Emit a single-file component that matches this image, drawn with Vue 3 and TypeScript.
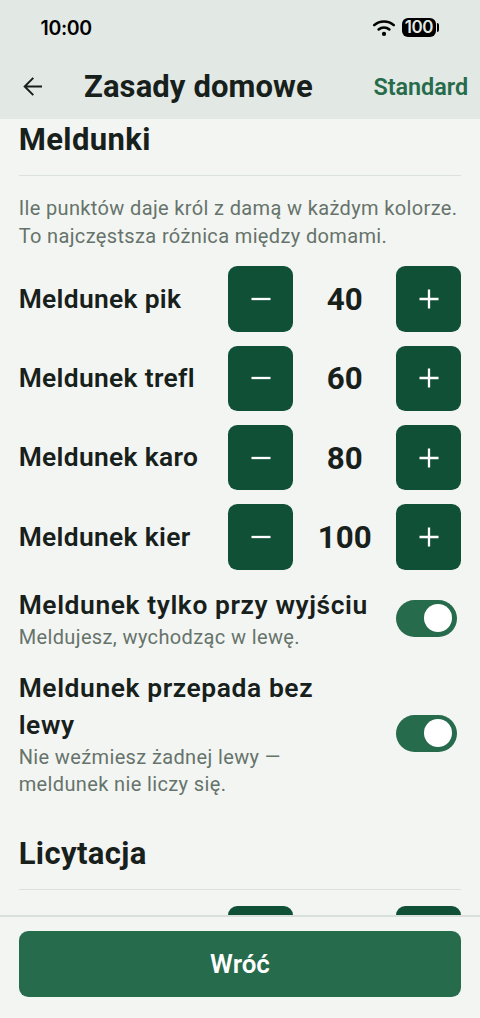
<script setup lang="ts">
import { ref } from 'vue'

interface Meld {
  label: string
  value: number
}
interface Option {
  title: string
  hint: string
  on: boolean
  kind: string
}

const melds = ref<Meld[]>([
  { label: 'Meldunek pik', value: 40 },
  { label: 'Meldunek trefl', value: 60 },
  { label: 'Meldunek karo', value: 80 },
  { label: 'Meldunek kier', value: 100 },
])

const options = ref<Option[]>([
  { title: 'Meldunek tylko przy wyjściu', hint: 'Meldujesz, wychodząc w lewę.', on: true, kind: 'short' },
  { title: 'Meldunek przepada bez lewy', hint: 'Nie weźmiesz żadnej lewy — meldunek nie liczy się.', on: true, kind: 'tall' },
])
</script>

<template>
  <div class="screen">
    <header class="top">
      <div class="status">
        <span class="clock">10:00</span>
        <span class="indicators">
          <svg class="wifi" width="24" height="18" viewBox="0 0 24 18" fill="none" stroke="#000" stroke-linecap="round">
            <path d="M2.2 6.2C7.6 1.2 16.4 1.2 21.8 6.2" stroke-width="2.5" />
            <path d="M6.6 10.5C9.7 7.8 14.3 7.8 17.4 10.5" stroke-width="2.5" />
            <circle cx="12" cy="14.9" r="2.1" fill="#000" stroke="none" />
          </svg>
          <span class="battery">100</span>
          <span class="nub"></span>
        </span>
      </div>
      <div class="bar">
        <svg class="back" width="20" height="20" viewBox="0 0 20 20" fill="none" stroke="#17201b" stroke-width="2">
          <path d="M19 9.5H2.2M10.3 .9L1.7 9.5l8.6 8.6" />
        </svg>
        <h1>Zasady domowe</h1>
        <span class="action">Standard</span>
      </div>
    </header>

    <main class="content">
      <h2 class="first">Meldunki</h2>
      <p class="intro">Ile punktów daje król z damą w każdym kolorze.<br />To najczęstsza różnica między domami.</p>

      <div v-for="m in melds" :key="m.label" class="row">
        <span class="label">{{ m.label }}</span>
        <button class="step" @click="m.value -= 10">
          <svg width="20" height="20" viewBox="0 0 20 20"><path d="M.5 10h19" stroke="#fff" stroke-width="2.3" /></svg>
        </button>
        <span class="value">{{ m.value }}</span>
        <button class="step" @click="m.value += 10">
          <svg width="20" height="20" viewBox="0 0 20 20"><path d="M.5 10h19M10 .5v19" stroke="#fff" stroke-width="2.3" /></svg>
        </button>
      </div>

      <div v-for="o in options" :key="o.title" class="option" :class="o.kind">
        <div class="copy">
          <div class="label">{{ o.title }}</div>
          <div class="hint">{{ o.hint }}</div>
        </div>
        <button class="switch" :class="{ on: o.on }" @click="o.on = !o.on"><span class="thumb"></span></button>
      </div>

      <h2 class="second">Licytacja</h2>
      <div class="row">
        <span class="label"></span>
        <button class="step"></button>
        <span class="value"></span>
        <button class="step"></button>
      </div>
    </main>

    <footer class="bottom">
      <button class="return">Wróć</button>
    </footer>
  </div>
</template>

<style>
body {
  margin: 0;
  background: #f3f5f2;
}
</style>

<style scoped>
.screen {
  width: 480px;
  height: 1018px;
  display: flex;
  flex-direction: column;
  overflow: hidden;
  background: #f3f5f2;
  color: #17201b;
  font-family: Roboto, sans-serif;
  font-variant-ligatures: none;
}
.screen * {
  box-sizing: border-box;
}
button {
  border: 0;
  padding: 0;
  font-family: inherit;
}
.top {
  flex: none;
  height: 119px;
  background: #e2e8e4;
}
.status {
  height: 55px;
  padding: 0 41px 0 40.5px;
  display: flex;
  align-items: center;
  justify-content: space-between;
  color: #000;
}
.clock {
  font: 600 19.5px/24px Inter, sans-serif;
  letter-spacing: -0.35px;
}
.indicators {
  display: flex;
  align-items: center;
}
.wifi {
  margin-right: 6px;
}
.battery {
  width: 33.5px;
  height: 18.6px;
  border-radius: 6px;
  background: #000;
  color: #e2e8e4;
  font: 600 17px/18.6px Inter, sans-serif;
  letter-spacing: -0.4px;
  text-align: center;
}
.nub {
  width: 2px;
  height: 9px;
  margin-left: 1.3px;
  border-radius: 0 2px 2px 0;
  background: #000;
}
.bar {
  height: 64px;
  padding: 0 12px 0 23px;
  display: flex;
  align-items: center;
}
.back {
  flex: none;
}
h1,
h2 {
  margin: 0;
  font-weight: 700;
  font-size: 31px;
}
h1 {
  flex: 1;
  margin-left: 41px;
  line-height: 40px;
  letter-spacing: 0.1px;
}
.action {
  font-size: 23.4px;
  font-weight: 600;
  letter-spacing: -0.05px;
  color: #266b4c;
}
.content {
  flex: 1;
  min-height: 0;
  overflow: hidden;
  padding: 0 18.67px;
}
h2 {
  line-height: 41px;
  letter-spacing: 0.38px;
  border-bottom: 1px solid #dbe1dd;
}
.first {
  height: 57px;
  margin-bottom: 18.3px;
}
.intro {
  margin: 0 -10px 15.9px 0;
  height: 56px;
  font-size: 20px;
  line-height: 28px;
  color: #66736b;
  white-space: nowrap;
  letter-spacing: 0.36px;
}
.row {
  display: flex;
  align-items: center;
  height: 65.33px;
  margin-bottom: 14px;
}
.label {
  flex: 1;
  font-size: 26.4px;
  font-weight: 600;
  line-height: 37.33px;
  letter-spacing: 0.32px;
}
.row .label {
  padding-top: 1px;
}
.step {
  flex: none;
  width: 65.33px;
  height: 65.33px;
  border-radius: 9.33px;
  background: #105036;
  display: flex;
  align-items: center;
  justify-content: center;
}
.value {
  width: 102.67px;
  padding-top: 1px;
  text-align: center;
  font-size: 31.3px;
  font-weight: 700;
}
.option {
  display: flex;
  align-items: center;
  padding-right: 4.67px;
}
.option .label {
  letter-spacing: 0.6px;
}
.short {
  margin-top: 2.6px;
  height: 70px;
}
.tall {
  margin-top: 16px;
  height: 128px;
}
.copy {
  flex: 1;
}
.hint {
  font-size: 20px;
  line-height: 26.67px;
  color: #66736b;
  letter-spacing: 0.37px;
}
.tall .copy {
  padding-right: 60px;
}
.switch {
  flex: none;
  width: 60.67px;
  height: 37.33px;
  padding: 0 4.67px;
  border-radius: 19px;
  background: #b8c3bc;
  display: flex;
  align-items: center;
}
.switch.on {
  background: #266b4c;
  justify-content: flex-end;
}
.thumb {
  width: 28px;
  height: 28px;
  border-radius: 50%;
  background: #fff;
}
.second {
  margin-top: 35.2px;
  height: 57px;
  margin-bottom: 16px;
}
.bottom {
  flex: none;
  height: 103px;
  padding: 14.4px 18.67px 0;
  border-top: 2.33px solid #d9e0dc;
}
.return {
  width: 100%;
  height: 65.33px;
  border-radius: 9.33px;
  background: #266b4c;
  color: #fff;
  font-size: 26px;
  font-weight: 600;
}
</style>
